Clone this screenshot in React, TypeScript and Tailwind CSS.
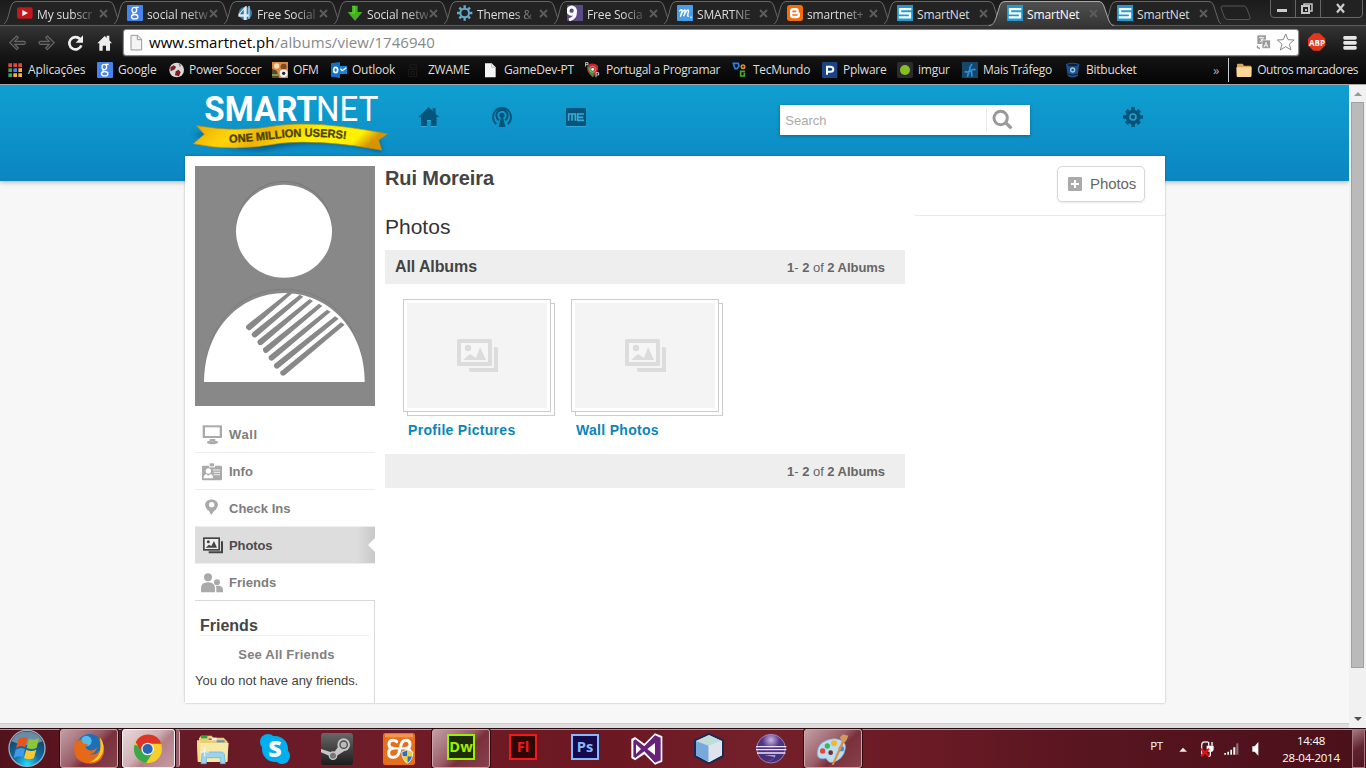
import type { ReactNode } from 'react';

type ArtProps = { box: [number, number, number, number]; className?: string; children: ReactNode };

// Drawing on a grid of three units per pixel.
function Art({ box, className = '', children }: ArtProps) {
  return (
    <svg
      className={`block shrink-0 ${className}`}
      width={box[2] / 3}
      height={box[3] / 3}
      viewBox={box.join(' ')}
    >
      {children}
    </svg>
  );
}

const UI = "font-['Open_Sans','Noto_Sans',sans-serif]";

/* ---------- favicons ---------- */
const Youtube = () => (
  <Art box={[0, 0, 48, 48]}>
    <rect x="0" y="7" width="47" height="34" rx="6" fill="#c4161c" />
    <path d="M16 15l17 9-17 9z" fill="#fff" />
  </Art>
);
const GoogleG = () => (
  <Art box={[0, 0, 48, 48]}>
    <rect width="48" height="48" rx="3" fill="#4683ea" />
    <ellipse cx="22" cy="15" rx="7" ry="8" fill="none" stroke="#fff" strokeWidth="4" />
    <path d="M26 7h9" stroke="#fff" strokeWidth="4" />
    <path d="M20 23q-5 4 1 6" stroke="#fff" strokeWidth="3.500" fill="none" />
    <ellipse cx="23" cy="35" rx="9.500" ry="6.500" fill="none" stroke="#fff" strokeWidth="4" />
  </Art>
);
const FourIcon = () => (
  <Art box={[0, 0, 48, 48]}>
    <circle cx="25" cy="25" r="20" fill="#2f7fae" />
    <path d="M26 3L4 28v7h16v10h9V35h7v-7h-7V3z" fill="#dfeaf2" />
    <path d="M20 14v14H9z" fill="#2b6c98" />
    <path d="M36 3v38" stroke="#b9d6ea" strokeWidth="4" />
  </Art>
);
const DownIcon = () => (
  <Art box={[0, 0, 48, 48]}>
    <path d="M2 22h6l16 15 16-15h6L24 48z" fill="#777" />
    <path d="M15 2h17v19h13L24 44 3 21h12z" fill="#3fb618" />
    <path d="M17 4h5v20h-9" stroke="#8ae35c" strokeWidth="2" fill="none" />
  </Art>
);
const GearFav = () => (
  <Art box={[0, 0, 48, 48]}>
    <circle cx="23" cy="24" r="13" fill="none" stroke="#64aac8" strokeWidth="6" />
    <g stroke="#64aac8" strokeWidth="7">
      <path d="M23 1v9M23 38v9M0 24h9M37 24h9M7 8l6 6M33 34l6 6M39 8l-6 6M13 34l-6 6" />
    </g>
  </Art>
);
const NineIcon = () => (
  <Art box={[0, 0, 48, 48]}>
    <rect width="48" height="48" fill="#5b4a86" />
    <circle cx="14" cy="17" r="11" fill="none" stroke="#fff" strokeWidth="9" />
    <path d="M25 14v10q0 15-19 21" stroke="#fff" strokeWidth="9" fill="none" />
  </Art>
);
const MIcon = () => (
  <Art box={[0, 0, 48, 48]}>
    <rect width="48" height="48" rx="3" fill="#4a9de4" />
    <path d="M7 19q5-7 8-4 1 2-5 20 8-20 13-20 4 0-3 19 8-19 13-19 4 0-1 14-2 6 4 4" fill="none" stroke="#fff" strokeWidth="4" />
    <circle cx="42" cy="37" r="2.500" fill="#fff" />
  </Art>
);
const Blogger = () => (
  <Art box={[0, 0, 48, 48]}>
    <rect width="48" height="48" rx="8" fill="#f76b08" />
    <path d="M18 9h9q8 0 8 8v3q0 3 4 3v7q0 10-10 10H18q-9 0-9-9V18q0-9 9-9z" fill="#fff" />
    <path d="M18 19h8M18 30h12" stroke="#f76b08" strokeWidth="5" strokeLinecap="round" />
  </Art>
);
const SmartS = () => (
  <Art box={[0, 0, 48, 48]}>
    <rect width="48" height="48" fill="#1f9bd1" />
    <path d="M43 12.500H9V25h30v12H5" stroke="#fff" strokeWidth="7" fill="none" />
  </Art>
);

/* ---------- tabs ---------- */
const tabs: { label: string; icon: ReactNode; active?: boolean; fade?: boolean }[] = [
  { label: 'My subscr', icon: <Youtube />, fade: true },
  { label: 'social netw', icon: <GoogleG />, fade: true },
  { label: 'Free Social', icon: <FourIcon />, fade: true },
  { label: 'Social netw', icon: <DownIcon />, fade: true },
  { label: 'Themes &', icon: <GearFav />, fade: true },
  { label: 'Free Socia', icon: <NineIcon />, fade: true },
  { label: 'SMARTNE', icon: <MIcon />, fade: true },
  { label: 'smartnet+', icon: <Blogger />, fade: true },
  { label: 'SmartNet', icon: <SmartS /> },
  { label: 'SmartNet', icon: <SmartS />, active: true },
  { label: 'SmartNet', icon: <SmartS /> },
];

function Tab({ label, icon, active, fade }: { label: string; icon: ReactNode; active?: boolean; fade?: boolean }) {
  return (
    <div className={`relative flex h-[26px] w-[110px] shrink-0 items-center pl-3 ${active ? 'z-10' : ''}`}>
      <svg className="absolute top-0 -left-[6px] overflow-visible" width="128" height="26">
        {active ? (
          <>
            <defs>
              <linearGradient id="act" x2="0" y2="1">
                <stop stopColor="#505050" />
                <stop offset="1" stopColor="#363636" />
              </linearGradient>
            </defs>
            <path d="M0 26C4 25 5 23 7 18L11 5Q12 1.500 16 1.500H110Q113 1.500 114.500 5L119 18Q121 25 125 26z" fill="url(#act)" />
            <path d="M0 25.500C4 25 5 23 7 18L11 5Q12 1.500 16 1.500H110Q113 1.500 114.500 5L119 18Q121 25 125 25.500" fill="none" stroke="#a9a9a9" />
          </>
        ) : (
          <path d="M5 24C7 23 8 20 9 17L12 6Q13.500 1.500 17 1.500H110Q113 1.500 114.500 5L119 19Q120 23 122 24" fill="#232323" stroke="#666" />
        )}
      </svg>
      <div className="relative flex items-center">
        {icon}
        <div className="ml-1 w-[57px]">
          <span
            className={`inline-block text-[12px] leading-4 tracking-[-0.15px] whitespace-nowrap ${
              fade ? '[mask-image:linear-gradient(90deg,#000_65%,rgba(0,0,0,0.25))]' : ''
            } ${active ? 'text-white' : 'text-[#dcdcdc]'}`}
          >
            {label}
          </span>
        </div>
        <svg className="ml-[5px]" width="9" height="9" viewBox="0 0 9 9">
          <path d="M1 1l7 7M8 1L1 8" stroke="#5c5c5c" strokeWidth="2" />
        </svg>
      </div>
    </div>
  );
}

function TabStrip() {
  return (
    <div className="flex h-[25px] justify-between bg-gradient-to-b from-[#1b1b1b] to-[#282828]">
      <div className="flex pl-[5px]">
        {tabs.map((t, i) => (
          <Tab key={i} {...t} />
        ))}
        <svg className="mt-[5px] ml-[4px]" width="34" height="16">
          <path d="M4 1H25Q27 1 28 4L31 12Q32 14.500 29 14.500H9Q6 14.500 5 11L2 3Q1.500 1 4 1z" fill="#202020" stroke="#555" />
        </svg>
      </div>
      <svg className="mr-[3px]" width="93" height="18">
        <path d="M.5 0V14Q.5 17.500 4 17.500H89Q92.500 17.500 92.500 14V0M25.500 0V17M50.500 0V17" fill="#222" stroke="#666" />
        <rect x="7" y="9" width="10" height="3" fill="#ccc" />
        <g fill="none" stroke="#c4c4c4" strokeWidth="2">
          <path d="M34 5V4h8v7h-2" strokeWidth="1.500" />
          <rect x="32" y="6" width="7" height="7" />
        </g>
        <path d="M35 9h2v2h-2z" fill="#bbb" />
        <path d="M67 4l7 8.500M74 4l-7 8.500" stroke="#ccc" strokeWidth="2.200" />
      </svg>
    </div>
  );
}

function Toolbar() {
  return (
    <div className="flex h-[34px] items-center border-t border-[#5a5a5a]">
      <Art box={[0, 84, 363, 87]} className="-mt-px">
        <g fill="#2b2b2b" stroke="#686868" strokeWidth="3.500" strokeLinejoin="round">
          <path d="M29 128l21-20 5 5-11 11h28q4 0 4 4.500T72 133H44l11 11-5 5z" />
          <path d="M163 128l-21-20-5 5 11 11h-27q-4 0-4 4.500t4 4.500h27l-11 11 5 5z" />
        </g>
        <path d="M240 117a18.500 18.500 0 1 0 4 19" fill="none" stroke="#eee" strokeWidth="8" />
        <path d="M249 106v22h-22z" fill="#eee" />
        <path d="M292 130l22-22 6 6v-7h8v14l8 9h-6v22h-12v-15h-10v15h-10v-22z" fill="#eee" />
      </Art>
      <div className="ml-[2px] flex h-[27px] w-[1176px] shrink-0 items-center rounded-[3px] border border-[#888] bg-white shadow-[0_0_0_1px_#333]">
        <Art box={[388, 102, 42, 51]} className="-mt-px ml-[5px]">
          <path d="M394 106h20l12 12v32h-32z" fill="#f4f4f4" stroke="#999" strokeWidth="3" />
          <path d="M413 106v13h13" fill="none" stroke="#999" strokeWidth="3" />
        </Art>
        <span className="-mt-px ml-[6px] flex-1 text-[15px] leading-5 tracking-[0.040px] whitespace-nowrap text-[#888]">
          <span className="text-black">www.smartnet.ph</span>/albums/view/1746940
        </span>
        <Art box={[1044, 100, 126, 57]} className="-mt-px mr-[2px]">
          <rect x="1054" y="107" width="26" height="26" fill="#999" />
          <path d="M1059 114h16M1067 111v3M1061 127q10-5 10-12M1064 117q3 6 10 9" stroke="#fff" strokeWidth="2.500" fill="none" />
          <rect x="1068" y="121" width="25" height="26" fill="#999" stroke="#fff" strokeWidth="2" />
          <path d="M1074 143l6-15 6 15M1076 138h8" stroke="#fff" strokeWidth="2.500" fill="none" />
          <path d="M1054 137v8h8M1053 141l9 7" stroke="#888" strokeWidth="2.500" fill="none" />
          <path d="M1139 103l7 17 18 1-14 12 5 18-16-10-16 10 5-18-14-12 18-1z" fill="#fff" stroke="#888" strokeWidth="3" />
        </Art>
      </div>
      <Art box={[1186, 84, 174, 87]} className="ml-[2px]">
        <path d="M1224 100h18l17 16v20l-16 16h-20l-16-16v-20z" fill="#e0371d" />
        <text x="1210" y="137" fontSize="28" fontWeight="700" fill="#fff" textLength="48" lengthAdjust="spacingAndGlyphs" fontFamily="Open Sans, sans-serif">ABP</text>
        <g fill="#e6e6e6">
          <rect x="1313" y="108" width="40" height="11" rx="4" />
          <rect x="1313" y="123" width="40" height="11" rx="4" />
          <rect x="1313" y="138" width="40" height="11" rx="4" />
        </g>
      </Art>
    </div>
  );
}

/* ---------- bookmarks ---------- */
const bookmarks: { label: string; w: string; text?: string; icon: ReactNode }[] = [
  {
    label: 'Aplicações', w: 'w-[89px]', text: 'ml-[4px] tracking-[-0.15px]',
    icon: (
      <Art box={[0, 0, 48, 48]}>
        <g fill="#e04a3a"><path d="M1 4h11v11H1zM16 4h11v11H16zM31 4h11v11H31z" /></g>
        <path d="M1 19h11v11H1z" fill="#3aa757" /><path d="M16 19h11v11H16z" fill="#4285f4" /><path d="M31 19h11v11H31zM31 34h11v11H31zM16 34h11v11H16z" fill="#f4b63a" /><path d="M1 34h11v11H1z" fill="#3aa757" />
      </Art>
    ),
  },
  { label: 'Google', w: 'w-[72px]', text: 'ml-[5px] tracking-[-0.15px]', icon: <GoogleG /> },
  {
    label: 'Power Soccer', w: 'w-[103px]',
    icon: (
      <Art box={[0, 0, 48, 48]}>
        <circle cx="23" cy="24" r="22" fill="#d9d9d9" />
        <path d="M4 16l10-6 7 4-3 8-13 6zM20 28l9-5 6 8-5 12-12-3z" fill="#801d24" />
        <path d="M28 4l8 5-3 7z" fill="#777" />
      </Art>
    ),
  },
  {
    label: 'OFM', w: 'w-[59px]', text: 'ml-[5px]',
    icon: (
      <Art box={[0, 0, 48, 48]}>
        <rect width="48" height="48" fill="#d98a45" />
        <path d="M0 20l14 6 8 22H0z" fill="#58462f" /><circle cx="14" cy="12" r="8" fill="#f6d9ad" /><circle cx="35" cy="14" r="9" fill="#7d4a26" />
        <circle cx="35" cy="34" r="12" fill="#eee" /><circle cx="35" cy="34" r="5" fill="#222" /><path d="M0 36h20v6H0z" fill="#7c9d4a" />
      </Art>
    ),
  },
  {
    label: 'Outlook', w: 'w-[76px]', text: 'ml-[5px]',
    icon: (
      <Art box={[0, 0, 48, 48]}>
        <rect x="22" y="12" width="26" height="24" fill="#1784d6" /><path d="M28 20l6 6 12-9" stroke="#fff" strokeWidth="4" fill="none" />
        <path d="M0 4l27-4v48L0 44z" fill="#0f72c6" /><ellipse cx="14" cy="24" rx="6" ry="8" fill="none" stroke="#fff" strokeWidth="5" />
      </Art>
    ),
  },
  {
    label: 'ZWAME', w: 'w-[76px]', text: 'ml-[5px]',
    icon: (
      <Art box={[0, 0, 48, 48]}>
        <path d="M9 8h19v10H9zM5 22h24v22H5zM13 28h9v10h-9z" fill="none" stroke="#1b1b1b" strokeWidth="3" />
      </Art>
    ),
  },
  {
    label: 'GameDev-PT', w: 'w-[102px]', text: 'ml-[5px]',
    icon: (
      <Art box={[0, 0, 48, 48]}>
        <path d="M6 4h20l12 12v30H6z" fill="#f5f5f5" /><path d="M26 4v12h12" fill="none" stroke="#aaa" strokeWidth="2" />
      </Art>
    ),
  },
  {
    label: 'Portugal a Programar', w: 'w-[147px]', text: 'ml-[5px] tracking-[-0.3px]',
    icon: (
      <Art box={[0, 0, 48, 48]}>
        <path d="M10 8q14-8 28 2 6 14-14 36Q-2 26 10 8z" fill="#c7282d" /><path d="M8 12q2 22 16 34l2-20z" fill="#2c9a3e" />
        <circle cx="23" cy="22" r="9" fill="none" stroke="#e9a9a9" strokeWidth="2" /><circle cx="23" cy="22" r="4" fill="#fff" />
        <path d="M1 14V2h8v6H2M33 46V32h8v7h-7" stroke="#eee" strokeWidth="2.500" fill="none" />
      </Art>
    ),
  },
  {
    label: 'TecMundo', w: 'w-[90px]', text: 'ml-[5px]',
    icon: (
      <Art box={[0, 0, 48, 48]}>
        <g fill="none" strokeWidth="5"><path d="M4 4h15l2 8-6 8H9z" stroke="#2a7fe0" /><circle cx="33" cy="14" r="5" stroke="#e88b2d" /><path d="M39 28H26v14h11V32" stroke="#47a830" /></g>
      </Art>
    ),
  },
  {
    label: 'Pplware', w: 'w-[75px]', text: 'ml-[5px]',
    icon: (
      <Art box={[0, 0, 48, 48]}>
        <rect width="46" height="48" rx="3" fill="#1c4386" /><path d="M15 38V14h10q9 0 9 7.500T25 29H16" stroke="#fff" strokeWidth="6" fill="none" />
      </Art>
    ),
  },
  {
    label: 'imgur', w: 'w-[65px]', text: 'ml-[5px]',
    icon: (
      <Art box={[0, 0, 48, 48]}>
        <rect width="48" height="48" rx="6" fill="#2c2c2c" /><circle cx="24" cy="24" r="15" fill="#85bf25" />
      </Art>
    ),
  },
  {
    label: 'Mais Tráfego', w: 'w-[103px]', text: 'ml-[5px]',
    icon: (
      <Art box={[0, 0, 48, 48]}>
        <rect width="48" height="48" fill="#164668" /><path d="M30 6q-8 10-7 17l-7 21M8 29q14 3 20-4 6-5 13-2M28 25l2 19" stroke="#2993dd" strokeWidth="5" fill="none" />
      </Art>
    ),
  },
  {
    label: 'Bitbucket', w: 'w-[100px]', text: 'ml-[5px]',
    icon: (
      <Art box={[0, 0, 48, 48]}>
        <path d="M3 6q20-8 40 0l-5 36q-15 9-30 0z" fill="#1d4f8b" /><ellipse cx="23" cy="9" rx="15" ry="4" fill="#0c213c" />
        <circle cx="23" cy="24" r="8" fill="#a9c4e2" /><circle cx="23" cy="24" r="4" fill="#1d4f8b" /><path d="M8 36q15 8 30 0" stroke="#0c213c" strokeWidth="3" fill="none" />
      </Art>
    ),
  },
];

function BookmarksBar() {
  return (
    <div className="flex h-[25px] items-center pl-2 text-[12px] leading-4 tracking-[-0.25px] whitespace-nowrap text-[#dedede]">
      {bookmarks.map((b) => (
        <div key={b.label} className={`mt-[-3px] flex shrink-0 items-center ${b.w}`}>
          {b.icon}
          <span className={b.text ?? 'ml-[4px]'}>{b.label}</span>
        </div>
      ))}
      <div className="mt-[-3px] ml-auto flex items-center pr-2">
        <span className="mr-[9px] text-[13px] text-[#aaa]">»</span>
        <div className="mr-[7px] h-[24px] w-px bg-[#c5ccd4]" />
        <Art box={[0, 0, 51, 48]}>
          <path d="M3 8q0-3 3-3h14l4 6h19q3 0 3 3v28H3z" fill="#d7a65c" />
          <path d="M1 16h46l-1 26q0 3-3 3H5q-3 0-3-3z" fill="#fbd897" />
        </Art>
        <span className="ml-[4px] tracking-[-0.48px]">Outros marcadores</span>
      </div>
    </div>
  );
}

/* ---------- site ---------- */
function Logo() {
  return (
    <Art box={[0, 3, 630, 213]}>
      <defs>
        <linearGradient id="gold" x2="1" y2=".15">
          <stop stopColor="#e9a500" />
          <stop offset=".25" stopColor="#ffd50a" />
          <stop offset=".4" stopColor="#edb009" />
          <stop offset=".65" stopColor="#ffef00" />
          <stop offset=".9" stopColor="#fff200" />
          <stop offset="1" stopColor="#d79400" />
        </linearGradient>
        <filter id="soft" x="-20%" y="-50%" width="140%" height="200%">
          <feGaussianBlur stdDeviation="8" />
        </filter>
      </defs>
      <g fontFamily="Roboto, sans-serif" fill="#fff">
        <text x="73" y="111" fontSize="104" fontWeight="700" textLength="338" lengthAdjust="spacingAndGlyphs">SMART</text>
        <text x="408" y="111" fontSize="104" fontWeight="400" textLength="187" lengthAdjust="spacingAndGlyphs">NET</text>
      </g>
      <path d="M40 150Q180 220 300 190Q450 160 605 205L600 170 300 140z" fill="#034e7c" opacity=".75" filter="url(#soft)" />
      <path d="M50 125Q170 145 270 128Q400 105 622 150L596 168 605 198Q420 165 300 178Q160 205 40 179L73 151z" fill="url(#gold)" stroke="#c88c00" strokeWidth="2" />
      <defs><path id="curve" d="M148 176Q230 172 310 161Q400 153 505 166" /></defs>
      <text fontFamily="Liberation Sans, sans-serif" fontWeight="700" fontSize="34" fill="#4a4300" stroke="#4a4300" strokeWidth="1">
        <textPath href="#curve" textLength="352" lengthAdjust="spacingAndGlyphs">ONE MILLION USERS!</textPath>
      </text>
    </Art>
  );
}

function Header() {
  return (
    <div className="h-[96px] shrink-0 bg-gradient-to-b from-[#109fd0] to-[#0b86c2] shadow-[0_1px_5px_rgba(0,0,0,0.3)]">
      <div className="flex pl-[180px]">
        <Logo />
        <Art box={[710, 60, 70, 78]} className="mt-[19px] ml-[27px]">
          <path d="M714 103l31-31 12 12v-8h9v17l11 10h-8v26h-17v-18h-12v18h-18v-26z" fill="#4bb3db" opacity=".6" />
          <path d="M714 100l31-31 12 12v-8h9v17l11 10h-8v26h-17v-18h-12v18h-18v-26z" fill="#05557b" />
        </Art>
        <Art box={[930, 60, 72, 78]} className="mt-[18px] ml-[50px]">
          <g fill="none" stroke="#05557b" strokeWidth="6">
            <path d="M949 123a27 27 0 1 1 34 0" />
            <path d="M957 112a17 17 0 1 1 18 0" />
          </g>
          <circle cx="966" cy="97" r="8" fill="#05557b" />
          <path d="M963 103h6l7 29h-20z" fill="#05557b" />
        </Art>
        <Art box={[1152, 60, 72, 78]} className="mt-[19px] ml-[50px]">
          <rect x="1158" y="74" width="60" height="55" rx="4" fill="#4bb3db" opacity=".6" />
          <rect x="1158" y="72" width="60" height="54" rx="4" fill="#05557b" />
          <path d="M1166 110V90h20v20M1176 90v20M1212 90h-19v19h19M1193 100h17" fill="none" stroke="#3aa9d6" strokeWidth="5" />
        </Art>
        <div className="mt-5 ml-[192px] flex h-[30px] w-[250px] items-center bg-white pl-[5px] shadow-[0_1px_3px_rgba(0,60,90,0.5)]">
          <span className="mt-px flex-1 text-[13px] text-[#aaa]">Search</span>
          <div className="h-6 w-px bg-[#eaeaea]" />
          <Art box={[682, 66, 123, 84]} className="mr-[2px]">
            <circle cx="723" cy="102" r="20" fill="none" stroke="#999" strokeWidth="9" />
            <path d="M738 116l17 17" stroke="#999" strokeWidth="10" />
          </Art>
        </div>
        <Art box={[1083, 63, 72, 75]} className="mt-[20px] ml-[91px]">
          <g stroke="#05557b" strokeWidth="11">
            <path d="M1119 69v60M1089 99h60M1099 79l40 40M1139 79l-40 40" />
          </g>
          <circle cx="1119" cy="99" r="22" fill="#05557b" />
          <circle cx="1119" cy="99" r="9" fill="#05557b" stroke="#2d9bc9" strokeWidth="5" />
        </Art>
      </div>
    </div>
  );
}

function Avatar() {
  return (
    <Art box={[30, 30, 540, 720]}>
      <rect x="30" y="30" width="540" height="720" fill="#888" />
      <ellipse cx="297" cy="219" rx="144" ry="144" fill="#777" />
      <ellipse cx="297" cy="221" rx="143" ry="143" fill="#888" />
      <ellipse cx="297" cy="226" rx="144" ry="139.500" fill="#fff" />
      <path d="M57 665C65 500 165 400 298 400S530 500 539 665" fill="none" stroke="#777" strokeWidth="2" />
      <path d="M57 678C57 520 165 411 298 411S539 520 539 678z" fill="#fff" />
      <g fill="#888">
        <path d="M186 507L311 408 322 412 199 520A9 9 0 0 1 186 507z" />
        <path d="M202 530L344 416 355 422 214 543A9 9 0 0 1 202 530z" />
        <path d="M219 553L374 429 384 435 231 566A9 9 0 0 1 219 553z" />
        <path d="M235 577L402 443 412 450 248 589A9 9 0 0 1 235 577z" />
        <path d="M252 600L426 461 437 467 265 612A9 9 0 0 1 252 600z" />
        <path d="M268 624L450 481 461 488 281 636A9 9 0 0 1 268 624z" />
        <path d="M286 647L468 499 479 506 299 658A9 9 0 0 1 286 647z" />
      </g>
    </Art>
  );
}

const menu: { label: string; active?: boolean; text: string; icon: ReactNode }[] = [
  {
    label: 'Wall',
    text: 'mt-px tracking-[0.6px]',
    icon: (
      <Art box={[45, 17, 72, 111]}>
        <path d="M53 45h58v38H53z" fill="#aaa" /><path d="M60 51h44v26H60z" fill="#fff" />
        <path d="M74 86h17v8H74z" fill="#aaa" /><path d="M66 96q0-4 5-4h4q7 5 14 0h5q5 0 5 4t-6 4q-10 3-22 0-5 0-5-4z" fill="#aaa" />
      </Art>
    ),
  },
  {
    label: 'Info',
    text: 'mt-px tracking-[0px]',
    icon: (
      <Art box={[45, 128, 72, 111]}>
        <rect x="51" y="166" width="60" height="44" rx="3" fill="#aaa" /><rect x="72" y="156" width="18" height="15" fill="#fff" /><rect x="74" y="159" width="13" height="9" fill="#aaa" />
        <circle cx="70" cy="182" r="8" fill="#fff" /><path d="M56 204q0-12 8-13l6 5 6-5q8 1 8 13z" fill="#fff" />
        <path d="M84 179h21M86 186h19M86 193h19" stroke="#fff" strokeWidth="2.500" />
      </Art>
    ),
  },
  {
    label: 'Check Ins',
    text: 'mt-px tracking-[0px]',
    icon: (
      <Art box={[45, 242, 72, 111]}>
        <path d="M79 317l-7-12q-12-7-12-20a20 19 0 0 1 39 0q0 13-12 20z" fill="#aaa" /><circle cx="80" cy="286" r="8" fill="#fff" />
      </Art>
    ),
  },
  {
    label: 'Photos',
    text: 'mt-px tracking-[-0.100px]',
    active: true,
    icon: (
      <Art box={[45, 350, 72, 111]}>
        <rect x="56.500" y="383.500" width="46" height="35" fill="#eee" stroke="#444" strokeWidth="5" />
        <circle cx="70" cy="394" r="4.500" fill="#444" /><path d="M62 412l10-9 7 4 8-15 9 20z" fill="#444" />
        <path d="M108 393h6v36H71v-6h37z" fill="#444" />
      </Art>
    ),
  },
  {
    label: 'Friends',
    text: 'tracking-[0.050px]',
    icon: (
      <Art box={[45, 461, 72, 111]}>
        <circle cx="69" cy="501" r="12" fill="#aaa" /><path d="M48 546v-12q0-18 21-18t21 18v12z" fill="#aaa" />
        <circle cx="96" cy="516" r="9" fill="#aaa" /><path d="M94 546v-12q0-4-2-7 22-3 22 12v7z" fill="#aaa" />
      </Art>
    ),
  },
];

function Sidebar() {
  return (
    <div className="flex w-[180px] flex-col">
      <Avatar />
      <div className="mt-[10px]">
        {menu.map((m, i) => (
          <div
            key={m.label}
            className={`flex h-[37px] items-center overflow-hidden pl-[5px] text-[13px] font-bold ${
              i < 4 ? 'border-b border-[#ededed]' : ''
            } ${m.active ? 'bg-[linear-gradient(90deg,#ddd_90%,#c8c8c8)] text-[#4c4c4c]' : 'text-[#7d7d7d]'}`}
          >
            {m.icon}
            <span className={`ml-[5px] flex-1 ${m.text}`}>{m.label}</span>
            {m.active && (
              <svg width="8" height="14" viewBox="0 0 8 14">
                <path d="M8 0v14L1 7z" fill="#fff" />
              </svg>
            )}
          </div>
        ))}
      </div>
      <div className="-mt-px h-[103px] border-t border-r border-[#d8d8d8] text-[#444]">
        <div className="mr-[5px] ml-[5px] flex h-[35px] items-end border-b border-[#eee] text-[16px] leading-[18px] font-bold">Friends</div>
        <div className="mt-[10px] pl-[4px] text-center text-[13px] leading-[18px] font-bold tracking-[0.2px] text-[#808080]">See All Friends</div>
        <div className="mt-[8px] text-[13px] leading-[18px] tracking-[-0.040px] whitespace-nowrap">You do not have any friends.</div>
      </div>
    </div>
  );
}

function CountLabel() {
  return (
    <span className="mt-px text-[13px] tracking-[-0.040px] text-[#666]">
      <b>1</b>- <b>2</b> of <b>2 Albums</b>
    </span>
  );
}

function Album({ title }: { title: string }) {
  return (
    <div className="w-[168px]">
      <div className="relative h-[117px] w-[152px]">
        <div className="absolute right-0 bottom-0 h-[113px] w-[148px] border border-[#ccc] bg-white" />
        <div className="relative h-[113px] w-[148px] border border-[#ccc] bg-white p-[3px]">
          <div className="flex h-full items-start bg-[#f4f4f4] pt-[36px] pl-[50px]">
            <svg width="41" height="33" viewBox="0 0 41 33">
              <path d="M37 8h2q2 0 2 2v23H14q-2 0-2-2v-2h25z" fill="#dcdcdc" />
              <rect width="35" height="27" rx="1.500" fill="#dcdcdc" />
              <rect x="4" y="4" width="27" height="19" fill="#f6f6f6" />
              <circle cx="11" cy="9" r="3.200" fill="#dcdcdc" />
              <path d="M6 21l7-6 6 4 4-11 6 13z" fill="#dcdcdc" />
            </svg>
          </div>
        </div>
      </div>
      <div className="mt-[5px] ml-[5px] text-[14px] leading-[18px] font-bold tracking-[0.3px] text-[#0a85bb]">{title}</div>
    </div>
  );
}

function Card() {
  return (
    <div className="relative -mt-[25px] ml-[185px] flex h-[547px] w-[980px] shrink-0 bg-white pt-[10px] pl-[10px] shadow-[0_0_2px_rgba(0,0,0,0.3)]">
      <Sidebar />
      <div className="ml-[10px] w-[520px]">
        <div className="text-[20px] leading-6 font-bold tracking-[-0.100px] text-[#444]">Rui Moreira</div>
        <div className="mt-[25px] text-[21px] leading-6 text-[#333]">Photos</div>
        <div className="mt-[11px] flex h-[34px] items-center justify-between bg-[#eee] pr-5 pl-[10px]">
          <span className="text-[16px] font-bold tracking-[-0.100px] text-[#444]">All Albums</span>
          <CountLabel />
        </div>
        <div className="mt-[15px] ml-[18px] flex">
          <Album title="Profile Pictures" />
          <Album title="Wall Photos" />
        </div>
        <div className="mt-[15px] flex h-[34px] items-center justify-end bg-[#eee] pr-5">
          <CountLabel />
        </div>
      </div>
      <div className="ml-[10px] h-[50px] w-[250px] border-b border-[#e9e9e9] pl-[142px]">
        <div className="flex h-[36px] w-[88px] items-center rounded-[5px] border border-[#d8d8d8] pl-[10px] shadow-[0_1px_2px_rgba(0,0,0,0.1)]">
          <svg width="14" height="14" viewBox="0 0 14 14">
            <rect width="14" height="14" rx="1" fill="#aaa" />
            <path d="M3 7h8M7 3v8" stroke="#fff" strokeWidth="2" />
          </svg>
          <span className="ml-2 text-[15px] leading-5 tracking-[-0.100px] text-[#666]">Photos</span>
        </div>
      </div>
    </div>
  );
}

function Scrollbar() {
  return (
    <div className="flex w-[17px] flex-col items-center bg-[#f1f1f1] pt-[7px]">
      <svg width="8" height="4"><path d="M0 4L4 0l4 4z" fill="#999" /></svg>
      <div className="mt-[6px] h-[566px] w-[13px] border border-[#a0a0a0] bg-[#bababa]" />
      <svg className="mt-auto mb-[7px]" width="8" height="4"><path d="M0 0h8L4 4z" fill="#505050" /></svg>
    </div>
  );
}

/* ---------- taskbar ---------- */
function Adobe({ label, fg, bg }: { label: string; fg: string; bg: string }) {
  return (
    <Art box={[0, 0, 84, 78]} className="-mt-[3px]">
      <rect x="3" y="3" width="78" height="72" fill={bg} stroke={fg} strokeWidth="6" />
      <text x="42" y="54" textAnchor="middle" fontFamily="Open Sans, sans-serif" fontWeight="700" fontSize="44" fill={fg}>{label}</text>
    </Art>
  );
}

const apps: { name: string; state?: 'open' | 'front'; icon: ReactNode }[] = [
  {
    name: 'firefox', state: 'open',
    icon: (
      <Art box={[218, 96, 96, 96]}>
        <circle cx="268" cy="138" r="39" fill="#1d6fb8" /><circle cx="258" cy="120" r="16" fill="#55bdec" />
        <path d="M226 110l5 14q6-10 14-10l2 12q8 4 18 3l-10 9q6 12 20 10 12-2 16-12-4 22-22 24 20 4 30-14 6-18-6-36 24 20 17 48-9 30-41 30-40-2-47-36-1-22 4-42z" fill="#e66a16" />
        <path d="M298 108q18 24 8 50-12 26-38 26 28-14 32-38 2-20-2-38z" fill="#fcc72b" />
      </Art>
    ),
  },
  {
    name: 'chrome', state: 'front',
    icon: (
      <Art box={[396, 96, 96, 96]} className="-ml-[2px]">
        <circle cx="444" cy="144" r="42" fill="#f8cf27" />
        <path d="M444 144L404 131A42 42 0 0 0 438 186L460 152z" fill="#3aa748" />
        <path d="M407 124A42 42 0 0 1 484 128H444L424 151z" fill="#dc3526" />
        <circle cx="443" cy="144" r="19" fill="#f2f2f2" /><circle cx="443" cy="144" r="15" fill="#2867b5" />
      </Art>
    ),
  },
  {
    name: 'explorer',
    icon: (
      <Art box={[588, 98, 102, 96]}>
        <path d="M597 114l6-8h32l5 6h31l12 12v60h-86z" fill="#e9cd73" />
        <rect x="603" y="106" width="19" height="8" fill="#25a640" /><path d="M626 112h24v8h-24z" fill="#eee" /><path d="M626 114h9v5h-9z" fill="#d44a2e" /><path d="M650 120h24v6h-24z" fill="#4495da" />
        <path d="M591 128h95l-5 57h-86z" fill="#f8e8a5" /><path d="M591 120h10v62l-8 2z" fill="#f4dd8a" />
        <path d="M603 190l3-29q2-6 10-6h47q8 0 10 6l3 29h-15v-18h-42v18z" fill="#9cd4ee" stroke="#5fb1d9" strokeWidth="2" />
        <path d="M614 142v26M601 155h26" stroke="#fff" strokeWidth="2.500" />
      </Art>
    ),
  },
  {
    name: 'skype',
    icon: (
      <Art box={[777, 96, 96, 96]}>
        <circle cx="825" cy="144" r="39" fill="#00aff0" /><circle cx="804" cy="123" r="24" fill="#00aff0" /><circle cx="846" cy="165" r="24" fill="#00aff0" />
        <text x="825" y="168" textAnchor="middle" fontFamily="Open Sans, sans-serif" fontWeight="800" fontSize="70" fill="#fff">S</text>
      </Art>
    ),
  },
  {
    name: 'steam',
    icon: (
      <Art box={[963, 96, 96, 96]}>
        <defs><linearGradient id="stm" x2="0" y2="1"><stop stopColor="#686868" /><stop offset="1" stopColor="#1c1c1c" /></linearGradient></defs>
        <rect x="963" y="96" width="96" height="96" rx="9" fill="url(#stm)" />
        <path d="M963 144l38 12 20-28 12 22-32 20-38-16z" fill="#c6c6c6" />
        <circle cx="999" cy="164" r="11" fill="#777" stroke="#c6c6c6" strokeWidth="4" />
        <circle cx="1031" cy="131" r="19" fill="#c6c6c6" /><circle cx="1031" cy="131" r="11" fill="#bbb" stroke="#4d4d4d" strokeWidth="4" />
      </Art>
    ),
  },
  {
    name: 'xampp',
    icon: (
      <Art box={[1149, 96, 96, 96]}>
        <rect x="1149" y="96" width="96" height="96" rx="7" fill="#e66f1c" /><path d="M1155 99h84v10h-84z" fill="#f4a56b" opacity=".7" />
        <g fill="none" stroke="#fff" strokeWidth="9" strokeLinecap="round">
          <path d="M1190 122Q1186 118 1179 118Q1167 118 1167 130T1180 142Q1166 143 1166 156T1179 169Q1192 169 1197 155L1203 132Q1207 118 1218 118Q1230 118 1230 130T1217 142Q1232 143 1231 156" />
          <path d="M1180 142H1217" strokeWidth="7" />
        </g>
        <path d="M1204 152l18-7 18 7q0 24-18 36-18-12-18-36z" fill="#eee" /><path d="M1207 154l15-6v18h-14zM1222 166h14q-3 13-14 19z" fill="#2472c8" /><path d="M1222 148l15 6-1 12h-14zM1222 166v19q-11-6-14-19z" fill="#f4ce25" />
      </Art>
    ),
  },
  { name: 'dreamweaver', state: 'open', icon: <Adobe label="Dw" fg="#9af000" bg="#1e2d08" /> },
  { name: 'flash', icon: <Adobe label="Fl" fg="#f41818" bg="#2e0806" /> },
  { name: 'photoshop', icon: <Adobe label="Ps" fg="#84b9ff" bg="#150a4c" /> },
  {
    name: 'visual studio',
    icon: (
      <Art box={[603, 36, 96, 96]}>
        <path d="M675 37l22 9v76l-22 9-32-31-28 18-11-7V54l11-6 28 20z" fill="#fff" />
        <path d="M675 43l17 7v68l-17 7-32-34-27 20-6-4V59l6-4 27 21z" fill="#68217a" />
        <path d="M618 70v29l15-15zM652 84l23-18v36z" fill="#fff" />
      </Art>
    ),
  },
  {
    name: 'cube',
    icon: (
      <Art box={[788, 36, 96, 96]}>
        <path d="M836 39l42 19v47l-42 22-42-22V58z" fill="#dce9f2" stroke="#172a51" strokeWidth="6" strokeLinejoin="round" />
        <path d="M836 42l38 18-39 14-38-14z" fill="#c0ddd9" /><path d="M797 60l38 14v50l-38-21z" fill="#79a9dc" /><path d="M874 60l-39 14v50l39-21z" fill="#dfe4ec" />
      </Art>
    ),
  },
  {
    name: 'eclipse',
    icon: (
      <Art box={[976, 36, 96, 96]}>
        <defs><radialGradient id="ecl" cy=".2"><stop stopColor="#c9b7e0" /><stop offset=".6" stopColor="#55358a" /><stop offset="1" stopColor="#473077" /></radialGradient></defs>
        <circle cx="1024" cy="83" r="43" fill="url(#ecl)" stroke="#b8a8d4" strokeWidth="2" />
        <path d="M979 77h91M979 86h91M982 96h85" stroke="#eee4fa" strokeWidth="4" /><path d="M1004 103h34q-8 18-26 18 20-4 22-14z" fill="#cdbde3" />
      </Art>
    ),
  },
  {
    name: 'paint', state: 'open',
    icon: (
      <Art box={[1158, 36, 102, 96]}>
        <path d="M1162 94q2-36 50-41 38 2 34 30-6 34-40 41-10 2-14-7-3-7-12-4-20 2-18-19z" fill="#b9def2" stroke="#7bb1d5" strokeWidth="2" />
        <circle cx="1178" cy="90" r="8" fill="#e4453a" /><circle cx="1192" cy="75" r="8" fill="#43b457" /><circle cx="1212" cy="67" r="9" fill="#f7b62b" /><circle cx="1234" cy="83" r="8" fill="#3f87d8" /><circle cx="1202" cy="95" r="7" fill="#732a39" />
        <path d="M1236 60l7 3-32 69h-6z" fill="#e58b35" /><path d="M1234 62l-4-14 10-8q8 4 15 3-2 10-10 21z" fill="#cf9c5e" />
      </Art>
    ),
  },
];

function Taskbar() {
  return (
    <div className="flex h-10 shrink-0 border-t border-[#260b12] bg-[linear-gradient(90deg,#52121c,#651a26_12%,#6f1c28_30%,#6b1822_45%,#74202b_55%,#6a1a24_68%,#571520_80%,#4a1019)] shadow-[inset_0_1px_0_#b98a92]">
      <Art box={[18, 87, 126, 117]} className="mr-[12px] ml-[6px]">
        <defs>
          <radialGradient id="orb" cy=".95" r=".9"><stop stopColor="#1ee0ff" /><stop offset=".4" stopColor="#1370a8" /><stop offset="1" stopColor="#173755" /></radialGradient>
        </defs>
        <circle cx="81" cy="145" r="54" fill="url(#orb)" stroke="#9aaebe" strokeWidth="4" />
        <path d="M34 124a52 52 0 0 1 94 0q-47 22-94 0z" fill="#b0cbdc" opacity=".55" />
        <path d="M55 117q14-10 28-3l-7 28q-14-7-28 2z" fill="#e5551e" /><path d="M87 116q14 7 30-1l-7 28q-14 8-30 0z" fill="#8cc63c" />
        <path d="M47 149q14-9 28-2l-6 25q-14-7-28 3z" fill="#3e9be8" /><path d="M79 149q14 8 30 0l-7 25q-14 8-30 0z" fill="#fbc72c" />
      </Art>
      <div className="flex gap-1">
        {apps.map((a) => (
          <div key={a.name} className="flex w-[58px]">
            <div
              className={`flex h-[39px] flex-1 items-center justify-center rounded-[3px] ${
                a.state === 'open'
                  ? 'border border-[#caa5ac] bg-[linear-gradient(135deg,#c39fa6,#9a5e68_45%,#7a303c_60%,#85424d)] shadow-[0_0_0_1px_#2c0a10]'
                  : ''
              } ${
                a.state === 'front'
                  ? 'border border-[#fff5f6] bg-[linear-gradient(135deg,#e8d8da,#d0b0b5_45%,#b48088_60%,#c79ba2)] shadow-[0_0_0_1px_#2c0a10]'
                  : ''
              }`}
            >
              {a.icon}
            </div>
            {a.state === 'front' && <div className="mt-px ml-px h-[37px] w-1 rounded-r-[3px] border-r border-[#d5b3b8] bg-[#94616a]" />}
          </div>
        ))}
      </div>
      <div className="ml-auto flex items-center text-white">
        <span className="mt-[-6px] mr-[16px] text-[11.5px] tracking-[-0.2px]">PT</span>
        <Art box={[148, 90, 264, 108]} className="-mt-px mr-[5px]">
          <path d="M149 155l11-12 12 12z" fill="#eee" />
          <path d="M236 126h-12q-8 0-8 10v22q0 6 6 6" fill="none" stroke="#ddd" strokeWidth="4" />
          <path d="M231 137h21v10q0 9-10 9t-11-9z" fill="#fff" /><path d="M237 126v11M247 126v11M242 155v9q0 5-7 5" stroke="#fff" strokeWidth="4" fill="none" />
          <path d="M214 146l24 23M238 146l-24 23" stroke="#f01010" strokeWidth="6" />
          <path d="M284 159h5v5h-5zM293 155h5v9h-5zM302 149h5v15h-5zM311 142h6v22h-6z" fill="#fff" /><path d="M320 130h6v34h-6z" fill="#987179" />
          <path d="M368 139h7l11-13v41l-11-12h-7z" fill="#fff" />
        </Art>
        <div className="mr-[2px] w-[78px] text-center text-[11.5px] leading-[17px] tracking-[-0.25px] whitespace-nowrap">
          <div>14:48</div>
          <div>28-04-2014</div>
        </div>
        <div className="mr-px h-[39px] w-[13px] border border-[#a9757f] bg-[linear-gradient(150deg,#a77881,#5f2430_50%,#501620)]" />
      </div>
    </div>
  );
}

export default function App() {
  return (
    <div className={`flex h-[768px] w-[1366px] flex-col overflow-hidden bg-[#f7f7f7] ${UI}`}>
      <div className="flex h-[85px] shrink-0 flex-col border-b border-[#a9a9a9] bg-black">
        <TabStrip />
        <div className="h-[59px] bg-gradient-to-b from-[#363636] via-[#161616] to-[#050505]">
          <Toolbar />
          <BookmarksBar />
        </div>
      </div>
      <div className="flex h-[643px] shrink-0 font-['Liberation_Sans',Arial,sans-serif]">
        <div className="flex flex-1 flex-col overflow-hidden">
          <Header />
          <Card />
          <div className="mt-auto h-[5px] shrink-0 border-t border-[#ccc] bg-[#dedede]" />
        </div>
        <Scrollbar />
      </div>
      <Taskbar />
    </div>
  );
}
